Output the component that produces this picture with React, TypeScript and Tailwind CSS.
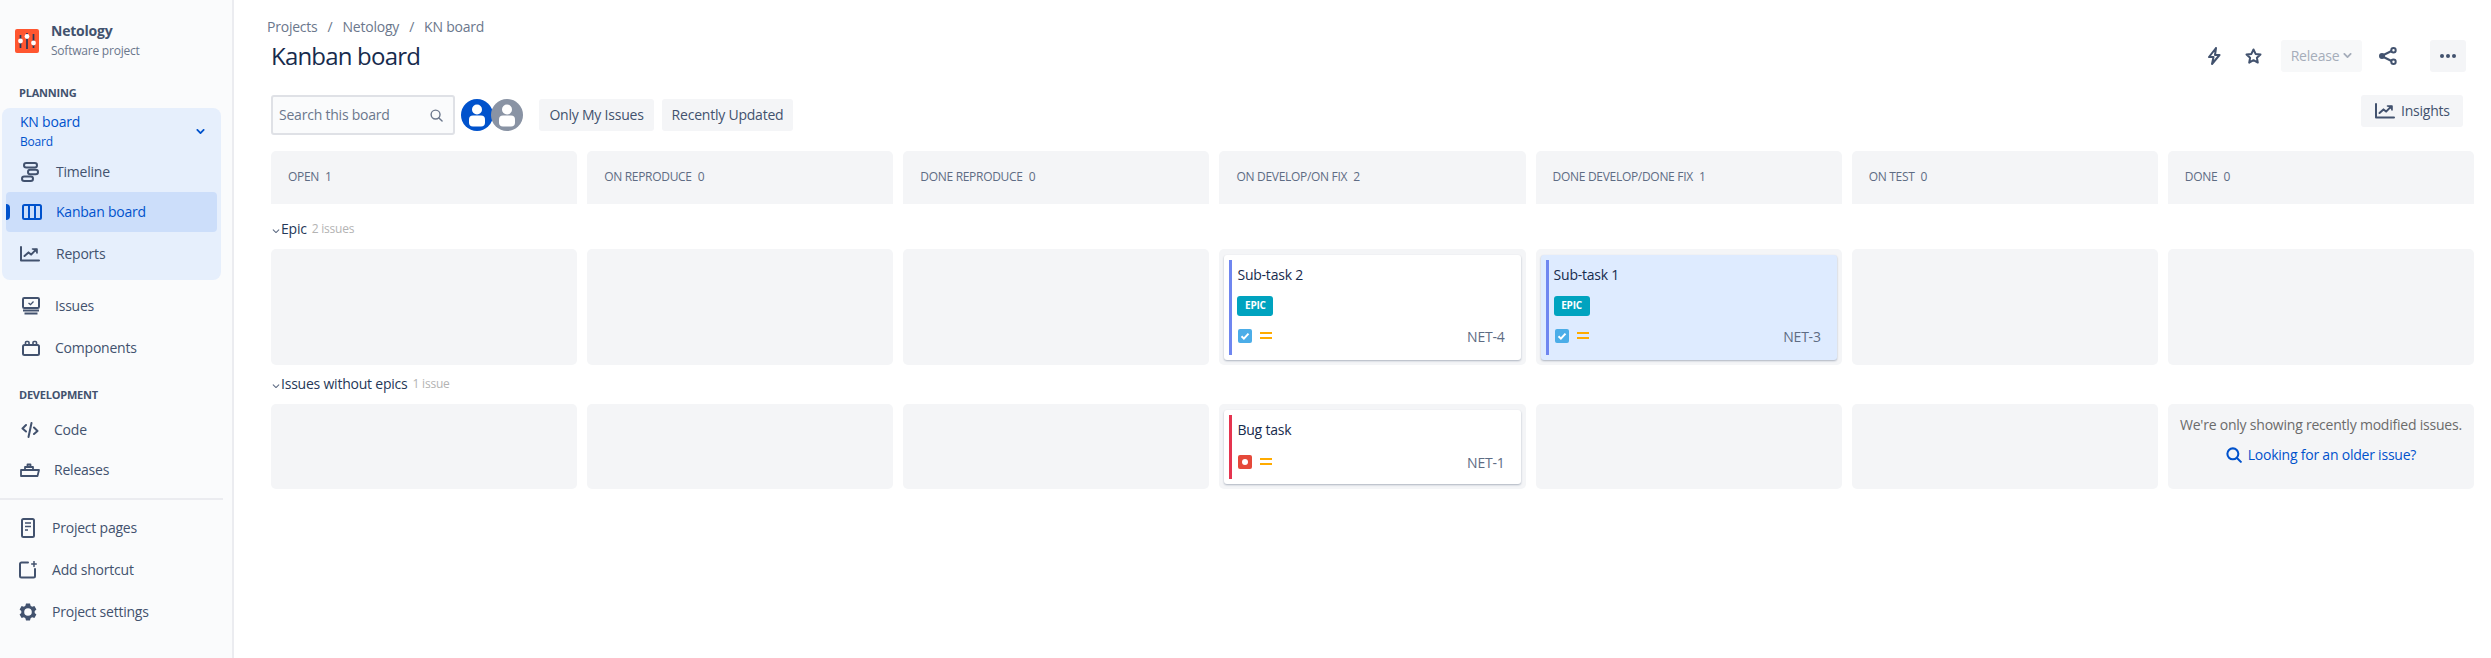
import React from "react";

const S = "#42526E";

const Logo = () => (
  <svg width="24" height="24" viewBox="0 0 24 24" className="shrink-0">
    <rect width="24" height="24" rx="2" fill="#FF5630" />
    <path d="M5.500 6v13M12 4v16M18.500 5v14" stroke="#253858" strokeWidth="1.700" />
    <circle cx="5.500" cy="12" r="2.400" fill="#fff" />
    <circle cx="12" cy="7.500" r="2.400" fill="#fff" />
    <circle cx="18.500" cy="14" r="2.400" fill="#fff" />
  </svg>
);

const Timeline = () => (
  <svg width="18" height="20" viewBox="0 0 18 20" fill="none" stroke={S} strokeWidth="2">
    <rect x="3" y="1" width="13" height="4.500" rx="2.250" />
    <rect x="7" y="7.700" width="10" height="4.500" rx="2.250" />
    <rect x="1" y="14.500" width="11" height="4.500" rx="2.250" />
  </svg>
);
const KanbanIcon = () => (
  <svg width="20" height="16" viewBox="0 0 20 16" fill="none" stroke="#0052CC" strokeWidth="2">
    <rect x="1" y="1" width="18" height="14" rx="1.500" />
    <path d="M7 1v14M13 1v14" />
  </svg>
);
const Chart = () => (
  <svg width="20" height="16" viewBox="0 0 20 16" fill="none" stroke={S} strokeWidth="2" strokeLinecap="round" strokeLinejoin="round">
    <path d="M1 1v13.500h18" />
    <path d="M4.500 10l4-3.600 2.600 2.200L16 3.600" />
    <path d="M12.500 3h4.500v4" strokeWidth="1.600" fill={S} />
  </svg>
);
const IssuesIcon = () => (
  <svg width="18" height="18" viewBox="0 0 18 18" fill="none" stroke={S} strokeWidth="2">
    <rect x="1" y="1" width="16" height="10" rx="1.200" />
    <path d="M6.500 6l2 1.600L11.500 4.500" strokeWidth="1.300" />
    <path d="M1 13.500h16M2.500 16.500h13" />
  </svg>
);
const ComponentsIcon = () => (
  <svg width="18" height="16" viewBox="0 0 18 16" fill="none" stroke={S} strokeWidth="2">
    <rect x="1" y="5" width="16" height="10" rx="1.500" />
    <path d="M3.500 5V2.500a1 1 0 0 1 1-1h1.500a1 1 0 0 1 1 1V5M11 5V2.500a1 1 0 0 1 1-1h1.500a1 1 0 0 1 1 1V5" strokeWidth="1.600" />
  </svg>
);
const CodeIcon = () => (
  <svg width="18" height="16" viewBox="0 0 18 16" fill="none" stroke={S} strokeWidth="2" strokeLinecap="round" strokeLinejoin="round">
    <path d="M5 3L1.500 6.500 5 9.500M13 5.500l3.500 3.500L13 12M10.500 1L7.500 15" />
  </svg>
);
const ShipIcon = () => (
  <svg width="20" height="14" viewBox="0 0 20 14" fill="none" stroke={S} strokeWidth="1.800" strokeLinejoin="round">
    <path d="M1 7h18l-1.500 6H1z" />
    <path d="M5 7V4h8v3M7.500 4V1.500h3V4" />
  </svg>
);
const PageIcon = () => (
  <svg width="14" height="20" viewBox="0 0 14 20" fill="none" stroke={S} strokeWidth="2">
    <rect x="1" y="1" width="12" height="18" rx="1.500" />
    <path d="M4 5h6M4 8.500h6M4 12h3" strokeWidth="1.600" />
  </svg>
);
const ShortcutIcon = () => (
  <svg width="18" height="18" viewBox="0 0 18 18" fill="none" stroke={S} strokeWidth="2" strokeLinecap="round">
    <path d="M9 1.500H2.500a1.500 1.500 0 0 0-1.500 1.500v12a1.500 1.500 0 0 0 1.500 1.500h12a1.500 1.500 0 0 0 1.500-1.500V8" />
    <path d="M15 0.500v5M12.700 3h4.600" strokeWidth="1.500" />
  </svg>
);
const GearIcon = () => (
  <svg width="18" height="18" viewBox="0 0 18 18">
    <path fill={S} fillRule="evenodd" d="M7 .5h4l.6 2.300 1.500.9 2.300-.7 2 3.400-1.700 1.700v1.800l1.700 1.700-2 3.400-2.300-.7-1.500.9-.6 2.300H7l-.6-2.300-1.500-.9-2.300.7-2-3.400 1.700-1.700V8.100L.6 6.400l2-3.400 2.300.7 1.500-.9zM9 5.200a3.800 3.800 0 1 0 0 7.600 3.800 3.800 0 0 0 0-7.600z" />
  </svg>
);
const Bolt = () => (
  <svg width="14" height="18" viewBox="0 0 14 18" fill="none" stroke={S} strokeWidth="2" strokeLinejoin="round">
    <path d="M9 1L2 10h4.500L5 17l7.500-9H8z" />
  </svg>
);
const Star = () => (
  <svg width="17" height="16" viewBox="0 0 17 16" fill="none" stroke={S} strokeWidth="2" strokeLinejoin="round">
    <path d="M8.500 1.500l2.100 4.400 4.900.6-3.600 3.300.9 4.800-4.300-2.400-4.300 2.400.9-4.800L1.500 6.500l4.900-.6z" />
  </svg>
);
const Share = () => (
  <svg width="18" height="18" viewBox="0 0 18 18" fill="none" stroke={S} strokeWidth="2">
    <circle cx="14.500" cy="3.200" r="2.200" />
    <circle cx="14.500" cy="14.800" r="2.200" />
    <circle cx="3" cy="9" r="2" fill={S} />
    <path d="M4.500 8l8-4M4.500 10l8 4" />
  </svg>
);
const SearchIcon = ({ color = "#6B778C", size = 13, w = 1.500 }: { color?: string; size?: number; w?: number }) => (
  <svg width={size} height={size} viewBox="0 0 14 14" fill="none" stroke={color} strokeWidth={w} strokeLinecap="round">
    <circle cx="6" cy="6" r="4.800" />
    <path d="M9.600 9.600L13 13" />
  </svg>
);
const Avatar = ({ color }: { color: string }) => (
  <svg width="32" height="32" viewBox="0 0 32 32" className="shrink-0">
    <circle cx="16" cy="16" r="16" fill={color} />
    <circle cx="16" cy="10.500" r="5" fill="#fff" />
    <rect x="8" y="16.500" width="16" height="11" rx="4" fill="#fff" />
  </svg>
);
const Chevron = ({ color, w = 10, sw = 2 }: { color: string; w?: number; sw?: number }) => (
  <svg width={w} height={(w * 6) / 10} viewBox="0 0 10 6" fill="none" stroke={color} strokeWidth={sw} strokeLinecap="round" strokeLinejoin="round">
    <path d="M1.500 1L5 4.500 8.500 1" />
  </svg>
);
const Priority = () => (
  <svg width="12" height="10" viewBox="0 0 12 10" className="shrink-0">
    <rect y="1" width="12" height="2" fill="#FFAB00" />
    <rect y="6" width="12" height="2" fill="#FFAB00" />
  </svg>
);
const TaskIcon = () => (
  <svg width="14" height="14" viewBox="0 0 14 14" className="shrink-0">
    <rect width="14" height="14" rx="2" fill="#4BADE8" />
    <path d="M3.500 7.300l2.400 2.300 4.600-5" fill="none" stroke="#fff" strokeWidth="2" />
  </svg>
);
const BugIcon = () => (
  <svg width="14" height="14" viewBox="0 0 14 14" className="shrink-0">
    <rect width="14" height="14" rx="2" fill="#E5493A" />
    <circle cx="7" cy="7" r="3" fill="#fff" />
  </svg>
);

function Nav({ icon, label, cls, iconCls, active }: { icon: React.ReactNode; label: string; cls: string; iconCls: string; active?: boolean }) {
  return (
    <div className={`flex items-center h-10 text-sm ${active ? "text-[#0052CC]" : "text-[#42526E]"} ${cls}`}>
      <span className={`flex items-center justify-center shrink-0 ${iconCls}`}>{icon}</span>
      <span>{label}</span>
    </div>
  );
}

function Sidebar() {
  return (
    <aside className="w-[234px] shrink-0 h-[658px] bg-[#FAFBFC] border-r-2 border-[#EBECF0]">
      <div className="flex items-center pt-[21px] pl-[15px] gap-3">
        <Logo />
        <div>
          <div className="h-5 leading-5 text-sm font-bold text-[#42526E]">Netology</div>
          <div className="h-5 leading-5 text-xs text-[#6B778C]">Software project</div>
        </div>
      </div>
      <div className="mt-6 ml-[19px] h-4 leading-4 text-[11px] font-bold text-[#42526E]">PLANNING</div>
      <div className="mt-[7px] ml-[2px] w-[219px] h-[172px] rounded-lg bg-[#E6EFFC] pt-1">
        <div className="flex items-center justify-between pl-[18px] pr-[16px] h-10">
          <div className="text-[#0052CC]">
            <div className="h-5 leading-5 text-sm">KN board</div>
            <div className="h-5 leading-5 text-xs">Board</div>
          </div>
          <Chevron color="#0052CC" w={9} />
        </div>
        <Nav cls="" iconCls="w-[54px] pl-[2px]" icon={<Timeline />} label="Timeline" />
        <div className="relative ml-1 mr-1 h-10 rounded bg-[#CCDEFA]">
          <span className="absolute left-0 top-3 h-4 w-1 rounded-r bg-[#0052CC]" />
          <Nav active cls="" iconCls="w-[50px] pl-[2px]" icon={<KanbanIcon />} label="Kanban board" />
        </div>
        <Nav cls="mt-[2px]" iconCls="w-[54px] pl-[2px]" icon={<Chart />} label="Reports" />
      </div>
      <Nav cls="mt-[6px] pl-[22px]" iconCls="w-[33px] !justify-start" icon={<IssuesIcon />} label="Issues" />
      <Nav cls="mt-[2px] pl-[22px]" iconCls="w-[33px] !justify-start" icon={<ComponentsIcon />} label="Components" />
      <div className="mt-[19px] ml-[19px] h-4 leading-4 text-[11px] font-bold text-[#42526E]">DEVELOPMENT</div>
      <Nav cls="mt-[7px] pl-[21px]" iconCls="w-[33px] !justify-start" icon={<CodeIcon />} label="Code" />
      <Nav cls="pl-[20px]" iconCls="w-[34px] !justify-start" icon={<ShipIcon />} label="Releases" />
      <div className="mt-2 h-[2px] w-[223px] bg-[#EBECF0]" />
      <Nav cls="mt-2 pl-[21px]" iconCls="w-[31px] !justify-start" icon={<PageIcon />} label="Project pages" />
      <Nav cls="mt-[2px] pl-[19px]" iconCls="w-[33px] !justify-start" icon={<ShortcutIcon />} label="Add shortcut" />
      <Nav cls="mt-[2px] pl-[19px]" iconCls="w-[33px] !justify-start" icon={<GearIcon />} label="Project settings" />
    </aside>
  );
}

const columns = [
  ["OPEN", 1],
  ["ON REPRODUCE", 0],
  ["DONE REPRODUCE", 0],
  ["ON DEVELOP/ON FIX", 2],
  ["DONE DEVELOP/DONE FIX", 1],
  ["ON TEST", 0],
  ["DONE", 0],
] as const;

function Card({ title, id, epic, bug, selected, h }: { title: string; id: string; epic?: boolean; bug?: boolean; selected?: boolean; h: string }) {
  return (
    <div className={`flex mx-[5px] rounded-[3px] py-[5px] pl-[5px] pr-4 shadow-[0_1px_2px_rgba(9,30,66,0.3)] ${h} ${selected ? "bg-[#DEEBFF]" : "bg-white"}`}>
      <div className={`w-[3px] shrink-0 ${bug ? "bg-[#E5344F]" : "bg-[#6F86F0]"}`} />
      <div className="flex-1 flex flex-col pl-[5px]">
        <div className="h-5 mt-[5px] leading-5 text-sm text-[#172B4D]">{title}</div>
        {epic && (
          <div className="mt-[11px] h-5 w-9 rounded-[3px] bg-[#00A3BF] text-white text-[10px] font-bold leading-[18px] text-center">EPIC</div>
        )}
        <div className={`flex items-center gap-2 pl-[1px] h-[18px] ${epic ? "mt-[12px]" : "mt-[14px]"}`}>
          <span className="-mt-[2px] flex items-center gap-2">
            {bug ? <BugIcon /> : <TaskIcon />}
            <Priority />
          </span>
          <span className="ml-auto text-sm text-[#5E6C84]">{id}</span>
        </div>
      </div>
    </div>
  );
}

function Row({ h, cards, last }: { h: string; cards: Record<number, React.ReactNode>; last?: React.ReactNode }) {
  return (
    <div className="grid grid-cols-7 gap-[10px]">
      {columns.map((_, i) => (
        <div key={i} className={`rounded-[5px] bg-[#F4F5F7] pt-[6px] ${h}`}>
          {cards[i]}
          {i === 6 && last}
        </div>
      ))}
    </div>
  );
}

function SwimLabel({ title, count, cls }: { title: string; count: string; cls: string }) {
  return (
    <div className={`flex items-center h-5 ${cls}`}>
      <span className="w-[10px] pt-[4px] pl-[1px] flex items-center shrink-0"><Chevron color="#5E6C84" w={8} sw={1.300} /></span>
      <span className="text-sm text-[#253858]">{title}</span>
      <span className="ml-[5px] text-xs text-[#B3B3B3]">{count}</span>
    </div>
  );
}

export default function App() {
  return (
    <div className="flex h-[658px] w-[2491px] overflow-hidden bg-white tracking-[-0.22px]" style={{ fontFamily: '"Open Sans", sans-serif' }}>
      <Sidebar />
      <main className="flex-1 min-w-0 pl-[37px] pr-[17px]">
        <div className="h-[94px]">
          <div className="pt-[17px] -ml-1 flex h-[37px] items-center text-sm text-[#6B778C] gap-[10px]">
            <span>Projects</span><span>/</span><span>Netology</span><span>/</span><span>KN board</span>
          </div>
          <div className="flex items-center h-8 mt-[3px]">
            <h1 className="text-2xl font-normal leading-8 text-[#172B4D] tracking-[-0.8px]">Kanban board</h1>
            <div className="ml-auto flex items-center h-8 pr-2">
              <Bolt />
              <span className="ml-[24px]"><Star /></span>
              <button className="ml-[19px] w-[81px] h-8 rounded-[3px] bg-[#F7F8F9] text-sm text-[#A5ADBA] flex items-center justify-center gap-1">
                Release <Chevron color="#A5ADBA" w={9} />
              </button>
              <span className="ml-[17px]"><Share /></span>
              <button className="ml-[33px] w-9 h-8 rounded-[3px] bg-[#F4F5F7] flex items-center justify-center gap-[2px]">
                <i className="w-1 h-1 rounded-full bg-[#42526E]" /><i className="w-1 h-1 rounded-full bg-[#42526E]" /><i className="w-1 h-1 rounded-full bg-[#42526E]" />
              </button>
            </div>
          </div>
        </div>
        <div className="flex items-start h-[57px]">
          <div className="w-[184px] h-10 mt-px rounded-[3px] border-2 border-[#DFE1E6] bg-[#FAFBFC] flex items-center justify-between pl-[6px] pr-[10px] text-sm text-[#6B778C]">
            Search this board <SearchIcon />
          </div>
          <div className="flex ml-[6px] mt-[5px]">
            <Avatar color="#0052CC" />
            <span className="-ml-[2px]"><Avatar color="#8993A4" /></span>
          </div>
          <button className="ml-4 mt-[5px] w-[115px] h-8 rounded-[3px] bg-[#F4F5F7] text-sm text-[#42526E]">Only My Issues</button>
          <button className="ml-2 mt-[5px] w-[131px] h-8 rounded-[3px] bg-[#F4F5F7] text-sm text-[#42526E]">Recently Updated</button>
          <button className="ml-auto mr-[11px] mt-[1px] w-[102px] h-8 rounded-[3px] bg-[#F4F5F7] text-sm text-[#42526E] flex items-center pl-[14px] gap-[6px]">
            <Chart /> Insights
          </button>
        </div>
        <div className="grid grid-cols-7 gap-[10px]">
          {columns.map(([name, n]) => (
            <div key={name} className="h-[53px] rounded-t-[5px] bg-[#F4F5F7] flex items-center pl-[17px] pb-[1px] text-xs tracking-[-0.3px] text-[#5E6C84] gap-[6px]">
              <span>{name}</span><span>{n}</span>
            </div>
          ))}
        </div>
        <SwimLabel cls="mt-[15px]" title="Epic" count="2 issues" />
        <div className="mt-[10px]">
          <Row
            h="h-[116px]"
            cards={{
              3: <Card h="h-[105px]" title="Sub-task 2" id="NET-4" epic />,
              4: <Card h="h-[105px]" title="Sub-task 1" id="NET-3" epic selected />,
            }}
          />
        </div>
        <SwimLabel cls="mt-[9px]" title="Issues without epics" count="1 issue" />
        <div className="mt-[10px]">
          <Row
            h="h-[85px]"
            cards={{ 3: <Card h="h-[74px]" title="Bug task" id="NET-1" bug /> }}
            last={
              <div className="flex flex-col items-center pt-[5px] text-sm">
                <div className="h-5 leading-5 text-[#6B6B6B]">We're only showing recently modified issues.</div>
                <div className="mt-[10px] h-5 leading-5 flex items-center gap-[6px] text-[#0052CC]">
                  <SearchIcon color="#0052CC" size={16} w={1.800} /> Looking for an older issue?
                </div>
              </div>
            }
          />
        </div>
      </main>
    </div>
  );
}
